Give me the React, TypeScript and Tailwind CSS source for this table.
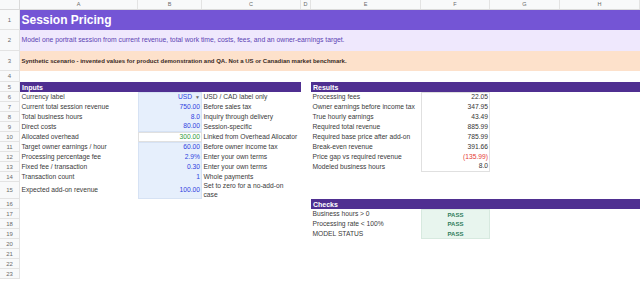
import type { ReactNode } from "react";

const COLS = ["A", "B", "C", "D", "E", "F", "G", "H"];

const INPUTS = [
  { label: "Currency label", value: "USD", note: "USD / CAD label only", kind: "select" },
  { label: "Current total session revenue", value: "750.00", note: "Before sales tax", kind: "input" },
  { label: "Total business hours", value: "8.0", note: "Inquiry through delivery", kind: "input" },
  { label: "Direct costs", value: "80.00", note: "Session-specific", kind: "input" },
  { label: "Allocated overhead", value: "300.00", note: "Linked from Overhead Allocator", kind: "link" },
  { label: "Target owner earnings / hour", value: "60.00", note: "Before owner income tax", kind: "input" },
  { label: "Processing percentage fee", value: "2.9%", note: "Enter your own terms", kind: "input" },
  { label: "Fixed fee / transaction", value: "0.30", note: "Enter your own terms", kind: "input" },
  { label: "Transaction count", value: "1", note: "Whole payments", kind: "input" },
];

const RESULTS = [
  { label: "Processing fees", value: "22.05" },
  { label: "Owner earnings before income tax", value: "347.95" },
  { label: "True hourly earnings", value: "43.49" },
  { label: "Required total revenue", value: "885.99" },
  { label: "Required base price after add-on", value: "785.99" },
  { label: "Break-even revenue", value: "391.66" },
  { label: "Price gap vs required revenue", value: "(135.99)", negative: true },
  { label: "Modeled business hours", value: "8.0" },
];

const CHECKS = ["Business hours > 0", "Processing rate < 100%", "MODEL STATUS"];

function Row({ n, h, children }: { n: number; h: string; children?: ReactNode }) {
  return (
    <div className={`grid grid-cols-[20px_118px_64px_99px_10px_110px_69px_70px_80px] ${h}`}>
      <div className="flex items-center justify-center border-r border-b border-[#e3e3e3] bg-[#f8f9fa] text-[6px] text-[#6b6b6b]">
        {n}
      </div>
      {children}
    </div>
  );
}

function Bar({ title, span }: { title: string; span: string }) {
  return (
    <div className={`${span} flex items-center bg-[#4f2f91] pl-[2px] text-[7px] font-bold text-white`}>
      {title}
    </div>
  );
}

function InputCell({ value, kind, first, last }: { value: string; kind: string; first?: boolean; last?: boolean }) {
  if (kind === "link") {
    return (
      <div className="flex items-center justify-end border border-[#e0e0e0] bg-white pr-[1px] text-[#2e9a3a]">
        {value}
      </div>
    );
  }
  return (
    <div
      className={`flex items-center justify-end border-x border-[#d6e2f4] bg-[#e6effc] pr-[1px] text-[#2f3fe0] ${
        first ? "border-t" : ""
      } ${last ? "border-b" : ""}`}
    >
      {value}
      {kind === "select" && <span className="ml-[3px] text-[5px] text-[#6a6a6a]">▼</span>}
    </div>
  );
}

export default function App() {
  return (
    <div className="h-[281px] w-[640px] overflow-hidden bg-white font-['Liberation_Sans',Arial,sans-serif] text-[6.7px] leading-none text-[#3a3a3a]">
      {/* column letters */}
      <div className="grid h-[10px] grid-cols-[20px_118px_64px_99px_10px_110px_69px_70px_80px] border-b border-[#dadada] bg-[#f8f9fa] text-[5.5px] text-[#6b6b6b]">
        <div className="border-r border-[#dadada]" />
        {COLS.map((c) => (
          <div key={c} className="flex items-center justify-center border-r border-[#e3e3e3]">
            {c}
          </div>
        ))}
      </div>

      <Row n={1} h="h-[20px]">
        <div className="col-span-8 flex items-center bg-[#7455d5] pl-[1.5px] text-[12px] font-bold text-white">
          Session Pricing
        </div>
      </Row>
      <Row n={2} h="h-[21px]">
        <div className="col-span-8 flex items-center whitespace-nowrap bg-[#efe8fd] pl-[1.5px] text-[6.8px] text-[#5c43b3]">
          Model one portrait session from current revenue, total work time, costs, fees, and an owner-earnings target.
        </div>
      </Row>
      <Row n={3} h="h-[20px]">
        <div className="col-span-8 flex items-center whitespace-nowrap bg-[#fde1cb] pl-[1.5px] text-[6px] font-bold text-[#3a2a1f]">
          Synthetic scenario - invented values for product demonstration and QA. Not a US or Canadian market benchmark.
        </div>
      </Row>
      <Row n={4} h="h-[11px]" />
      <Row n={5} h="h-[10px]">
        <Bar title="Inputs" span="col-span-3" />
        <div />
        <Bar title="Results" span="col-span-4" />
      </Row>

      {INPUTS.map((inp, i) => {
        const res = RESULTS[i];
        return (
          <Row key={inp.label} n={6 + i} h="h-[10px]">
            <div className="flex items-center whitespace-nowrap pl-[1.5px]">{inp.label}</div>
            <InputCell value={inp.value} kind={inp.kind} first={i === 0 || i === 5} last={i === 3} />
            <div className="flex items-center whitespace-nowrap pl-[1.5px]">{inp.note}</div>
            <div />
            <div className="flex items-center whitespace-nowrap pl-[1.5px]">{res ? res.label : ""}</div>
            {res ? (
              <div
                className={`flex items-center justify-end border-x border-[#e0e0e0] bg-white pr-[1px] ${
                  i === 0 ? "border-t" : ""
                } ${i === RESULTS.length - 1 ? "border-b" : ""} ${res.negative ? "text-[#e53935]" : "text-[#333]"}`}
              >
                {res.value}
              </div>
            ) : (
              <div />
            )}
            <div />
            <div />
          </Row>
        );
      })}

      <Row n={15} h="h-[17px]">
        <div className="flex items-center whitespace-nowrap pl-[1.5px]">Expected add-on revenue</div>
        <InputCell value="100.00" kind="input" last />
        <div className="flex items-center pl-[1.5px] pr-[4px] leading-[1.3]">
          Set to zero for a no-add-on case
        </div>
        <div />
        <div />
        <div />
        <div />
        <div />
      </Row>

      <Row n={16} h="h-[10px]">
        <div className="col-span-4" />
        <Bar title="Checks" span="col-span-4" />
      </Row>

      {CHECKS.map((c, i) => (
        <Row key={c} n={17 + i} h="h-[10px]">
          <div className="col-span-4" />
          <div className="flex items-center whitespace-nowrap pl-[1.5px]">{c}</div>
          <div
            className={`flex items-center justify-center border-x border-[#d7e9df] bg-[#e8f5ee] text-[6px] font-bold text-[#2f7d5b] ${
              i === 0 ? "border-t" : ""
            } ${i === CHECKS.length - 1 ? "border-b" : ""}`}
          >
            PASS
          </div>
          <div />
          <div />
        </Row>
      ))}

      {[20, 21, 22, 23].map((n) => (
        <Row key={n} n={n} h="h-[10px]" />
      ))}
    </div>
  );
}
